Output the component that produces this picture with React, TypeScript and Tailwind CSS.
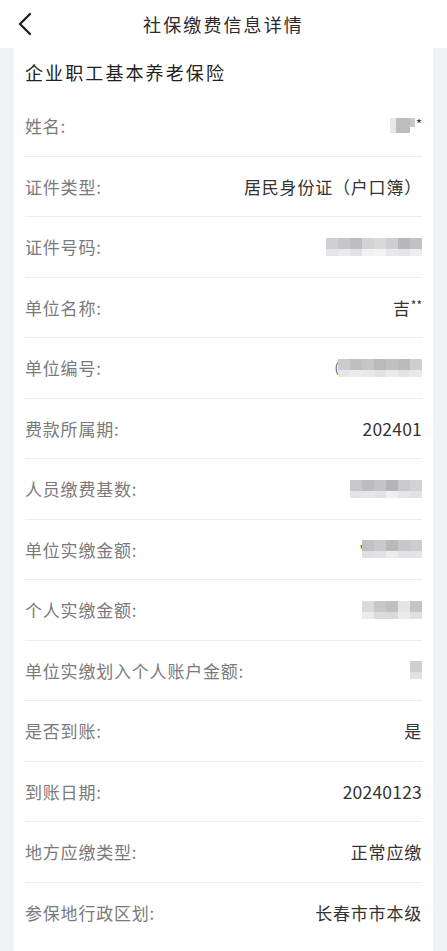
import React from "react";

type Tile = { w: number; top: string; bot: string };

const Pix = ({ tiles, lead }: { tiles: Tile[]; lead?: string }) => (
  <div className="flex items-center">
    {lead ? <span className="text-[#555] text-[13px] leading-none tracking-normal mr-[-1px]">{lead}</span> : null}
    {tiles.map((t, i) => (
      <div key={i} className="flex flex-col" style={{ width: t.w }}>
        <div className="h-[11px]" style={{ background: t.top }} />
        <div className="h-[7px]" style={{ background: t.bot }} />
      </div>
    ))}
  </div>
);

const mk = (cols: [string, string][], w = 12): Tile[] => cols.map(([top, bot]) => ({ w, top, bot }));

const Num = ({ children }: { children: React.ReactNode }) => (
  <span className="text-[17.5px] tracking-[0.2px]">{children}</span>
);

const rows: { label: string; value: React.ReactNode }[] = [
  {
    label: "姓名:",
    value: (
      <div className="flex items-start">
        <div className="flex">
          <div className="w-[6px] h-[15px] bg-[#e8e8ea]" />
          <div className="w-[14px] h-[15px] bg-[#bdbdc0]" />
          <div className="w-[5px] h-[9px] bg-[#c8c8cb]" />
        </div>
        <span className="text-[#333] text-[13px] leading-none ml-[1px] -mt-[1px] tracking-normal">*</span>
      </div>
    ),
  },
  { label: "证件类型:", value: <span>居民身份证（户口簿）</span> },
  {
    label: "证件号码:",
    value: (
      <Pix
        tiles={mk([
          ["#d0d0d4", "#e6e6e8"],
          ["#c6c6ca", "#ebebed"],
          ["#bdbdc1", "#e2e2e4"],
          ["#d4d4d7", "#f2f2f3"],
          ["#dadadc", "#f4f4f5"],
          ["#cfcfd2", "#e8e8ea"],
          ["#b8b8bc", "#e4e4e6"],
          ["#c2c2c5", "#eeeeef"],
        ])}
      />
    ),
  },
  {
    label: "单位名称:",
    value: (
      <span className="flex items-start">
        吉<span className="text-[12px] leading-none tracking-normal">**</span>
      </span>
    ),
  },
  {
    label: "单位编号:",
    value: (
      <Pix
        lead="("
        tiles={mk([
          ["#cbcbcf", "#e6e6e8"],
          ["#bfbfc3", "#ececee"],
          ["#c6c6ca", "#e8e8ea"],
          ["#b9b9bd", "#e2e2e4"],
          ["#c1c1c5", "#ececee"],
          ["#bbbbbf", "#e4e4e6"],
          ["#cfcfd2", "#e9e9eb"],
        ])}
      />
    ),
  },
  { label: "费款所属期:", value: <Num>202401</Num> },
  {
    label: "人员缴费基数:",
    value: (
      <Pix
        tiles={mk([
          ["#c8c8cc", "#e4e4e6"],
          ["#bdbdc1", "#e6e6e8"],
          ["#c4c4c8", "#e4e4e6"],
          ["#b5b5b9", "#f0f0f1"],
          ["#cacacd", "#e6e6e8"],
          ["#d2d2d5", "#e2e2e4"],
        ])}
      />
    ),
  },
  {
    label: "单位实缴金额:",
    value: (
      <Pix
        lead="'"
        tiles={mk([
          ["#c1c1c5", "#e0e0e2"],
          ["#c9c9cc", "#e2e2e4"],
          ["#b9b9bd", "#ededee"],
          ["#c8c8cb", "#e3e3e5"],
          ["#cdcdd0", "#e4e4e6"],
        ])}
      />
    ),
  },
  {
    label: "个人实缴金额:",
    value: (
      <Pix
        tiles={mk([
          ["#dadadc", "#ebebec"],
          ["#c8c8cb", "#dcdcde"],
          ["#c0c0c4", "#dadadd"],
          ["#e4e4e6", "#ebebec"],
          ["#c4c4c8", "#e0e0e2"],
        ])}
      />
    ),
  },
  {
    label: "单位实缴划入个人账户金额:",
    value: <Pix tiles={mk([["#cfcfd2", "#e2e2e4"]])} />,
  },
  { label: "是否到账:", value: <span>是</span> },
  { label: "到账日期:", value: <Num>20240123</Num> },
  { label: "地方应缴类型:", value: <span>正常应缴</span> },
  { label: "参保地行政区划:", value: <span>长春市市本级</span> },
];

export default function App() {
  return (
    <div
      className="w-[447px] min-h-[951px] bg-[#f1f2f6]"
      style={{ fontFamily: '"Noto Sans CJK SC", "Noto Sans", sans-serif' }}
    >
      <header className="relative h-[48px] bg-white flex items-center justify-center">
        <button className="absolute left-[16px] top-[12px] w-[18px] h-[24px] flex items-center justify-center">
          <svg width="16" height="24" viewBox="0 0 16 24" fill="none">
            <path d="M13 2 L3 12 L13 22" stroke="#222" strokeWidth="2.4" strokeLinecap="round" strokeLinejoin="round" />
          </svg>
        </button>
        <h1 className="text-[18px] tracking-[2.1px] text-[#2a2a2a] font-normal leading-none">社保缴费信息详情</h1>
      </header>
      <main className="mx-[14px] bg-white px-[11px] pb-[20px]">
        <div className="h-[48px] flex items-center">
          <h2 className="text-[18px] tracking-[2.1px] text-[#222] font-normal leading-none">企业职工基本养老保险</h2>
        </div>
        {rows.map((r, i) => (
          <div
            key={i}
            className={`h-[60.5px] flex items-center justify-between ${i < rows.length - 1 ? "border-b border-[#ececee]" : ""}`}
          >
            <span className="text-[17px] tracking-[0.8px] text-[#7a7a7c] leading-none">{r.label}</span>
            <div className="text-[17px] tracking-[0.8px] text-[#333] leading-none flex items-center">{r.value}</div>
          </div>
        ))}
      </main>
    </div>
  );
}
